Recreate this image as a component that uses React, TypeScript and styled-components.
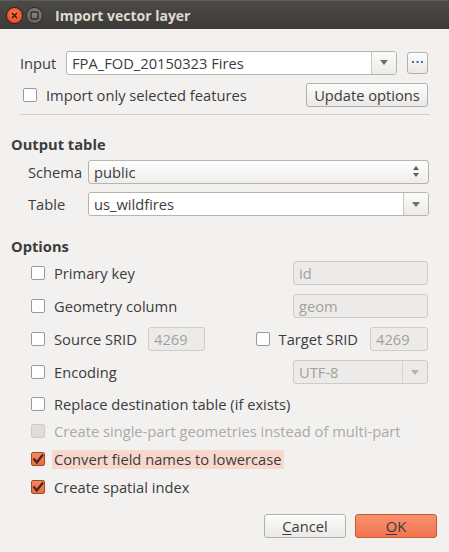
import React from "react";
import styled, { createGlobalStyle, css } from "styled-components";

const Global = createGlobalStyle`
  html, body { margin: 0; padding: 0; background: #f2f1f0; }
  body { font-family: "Open Sans", "DejaVu Sans", sans-serif; }
  * { box-sizing: border-box; }
`;

const FONT = `"Open Sans", "DejaVu Sans", sans-serif`;

const Window = styled.div`
  width: 449px;
  height: 552px;
  background: #f2f1f0;
  display: flex;
  flex-direction: column;
  font-family: ${FONT};
  font-size: 14.7px;
  color: #3c3c3c;
  overflow: hidden;
`;

const TitleBar = styled.div`
  height: 29px;
  flex: none;
  background: linear-gradient(#4b4a46, #3c3b37);
  border-top: 1px solid #5e5c57;
  display: flex;
  align-items: center;
  padding-left: 6px;
  gap: 3px;
`;

const WinButton = styled.div<{ $kind: "close" | "min" }>`
  width: 17px;
  height: 17px;
  border-radius: 50%;
  display: flex;
  align-items: center;
  justify-content: center;
  ${(p) =>
    p.$kind === "close"
      ? css`
          background: radial-gradient(circle at 50% 35%, #f7774f, #e0441c);
          border: 1px solid #3a1a10;
        `
      : css`
          background: radial-gradient(circle at 50% 35%, #87857f, #5f5d58);
          border: 1px solid #2c2b28;
        `}
`;

const Title = styled.div`
  margin-left: 9px;
  color: #dfdbd2;
  font-weight: 700;
  font-size: 14px;
`;

const Body = styled.div`
  flex: 1;
  display: flex;
  flex-direction: column;
  padding: 0 11px 0 11px;
`;

const Row = styled.div<{ $top?: number; $left?: number; $right?: number; $h?: number }>`
  display: flex;
  align-items: center;
  height: ${(p) => p.$h ?? 24}px;
  margin-top: ${(p) => p.$top ?? 0}px;
  padding-left: ${(p) => p.$left ?? 0}px;
  padding-right: ${(p) => p.$right ?? 0}px;
  flex: none;
`;

const Label = styled.span<{ $w?: number; $disabled?: boolean }>`
  ${(p) => (p.$w ? `width: ${p.$w}px; flex: none;` : "")}
  color: ${(p) => (p.$disabled ? "#acaaa6" : "#3c3c3c")};
  white-space: nowrap;
`;

const Separator = styled.div`
  height: 1px;
  background: #d3d0cc;
  margin: 7px 8px 0 9px;
  flex: none;
`;

const Heading = styled.div<{ $top: number }>`
  font-weight: 700;
  margin-top: ${(p) => p.$top}px;
  height: 20px;
  line-height: 20px;
  flex: none;
`;

const Field = styled.div<{ $w?: number; $disabled?: boolean; $grow?: boolean }>`
  height: 24px;
  ${(p) => (p.$w ? `width: ${p.$w}px; flex: none;` : "")}
  ${(p) => (p.$grow ? "flex: 1;" : "")}
  border: 1px solid ${(p) => (p.$disabled ? "#cfccc7" : "#b7b4ae")};
  border-radius: 3px;
  background: ${(p) => (p.$disabled ? "#ecebe9" : "#ffffff")};
  color: ${(p) => (p.$disabled ? "#a3a19d" : "#3c3c3c")};
  display: flex;
  align-items: center;
  overflow: hidden;
`;

const FieldText = styled.span`
  flex: 1;
  padding-left: 5px;
  white-space: nowrap;
`;

const ArrowPart = styled.div<{ $disabled?: boolean }>`
  width: 25px;
  height: 100%;
  flex: none;
  border-left: 1px solid ${(p) => (p.$disabled ? "#d6d3cf" : "#c9c6c1")};
  background: ${(p) => (p.$disabled ? "#ecebe9" : "linear-gradient(#fbfbfa, #ecebe9)")};
  display: flex;
  align-items: center;
  justify-content: center;
`;

const Down = styled.div<{ $disabled?: boolean }>`
  width: 0;
  height: 0;
  border-left: 4px solid transparent;
  border-right: 4px solid transparent;
  border-top: 5px solid ${(p) => (p.$disabled ? "#b6b4b0" : "#6f6d69")};
`;

const SpinCombo = styled.div`
  flex: 1;
  height: 24px;
  border: 1px solid #b7b4ae;
  border-radius: 3px;
  background: linear-gradient(#fdfdfd, #efeeec);
  display: flex;
  align-items: center;
  padding-right: 9px;
`;

const UpDown = styled.div`
  display: flex;
  flex-direction: column;
  gap: 3px;
  align-items: center;
`;

const Up = styled.div`
  width: 0;
  height: 0;
  border-left: 3.5px solid transparent;
  border-right: 3.5px solid transparent;
  border-bottom: 4px solid #5e5c58;
`;

const SmallDown = styled.div`
  width: 0;
  height: 0;
  border-left: 3.5px solid transparent;
  border-right: 3.5px solid transparent;
  border-top: 4px solid #5e5c58;
`;

const Button = styled.button<{ $w: number; $h?: number; $primary?: boolean }>`
  width: ${(p) => p.$w}px;
  height: ${(p) => p.$h ?? 24}px;
  flex: none;
  font-family: ${FONT};
  font-size: 14.7px;
  color: #3c3c3c;
  border-radius: 3px;
  padding: 0;
  display: flex;
  align-items: center;
  justify-content: center;
  ${(p) =>
    p.$primary
      ? css`
          border: 1px solid #c65a34;
          background: linear-gradient(#f99170, #f2754e);
        `
      : css`
          border: 1px solid #b3b0aa;
          background: linear-gradient(#fcfcfb, #eae9e7);
          box-shadow: inset 0 1px 0 #ffffff;
        `}
`;

const Box = styled.span<{ $checked?: boolean; $disabled?: boolean }>`
  width: 14px;
  height: 14px;
  flex: none;
  border-radius: 2px;
  display: inline-flex;
  align-items: center;
  justify-content: center;
  ${(p) =>
    p.$checked
      ? css`
          background: linear-gradient(#f6875e, #ed6a3e);
          border: 1px solid #a4482a;
        `
      : p.$disabled
      ? css`
          background: #e0dedb;
          border: 1px solid #cfccc8;
        `
      : css`
          background: #ffffff;
          border: 1px solid #9c9a96;
        `}
`;

const Check = ({ checked, disabled }: { checked?: boolean; disabled?: boolean }) => (
  <Box $checked={checked} $disabled={disabled}>
    {checked && (
      <svg width="12" height="12" viewBox="0 0 12 12">
        <path d="M1.5 5.5 L4.8 9.5 L11 1.5" fill="none" stroke="#3b2a22" strokeWidth="2.2" />
      </svg>
    )}
  </Box>
);

const CheckItem = styled.div<{ $gap?: number }>`
  display: flex;
  align-items: center;
  gap: ${(p) => p.$gap ?? 9}px;
`;

const Highlight = styled.span`
  background: #f8d8cd;
  padding: 0 3px 0 2px;
  height: 19px;
  line-height: 19px;
  margin-left: -2px;
`;

const Spacer = styled.div<{ $w?: number }>`
  ${(p) => (p.$w ? `width: ${p.$w}px; flex: none;` : "flex: 1;")}
`;

const SridGrid = styled.div`
  display: grid;
  grid-template-columns: 117px 57px 1fr 58px;
  align-items: center;
  height: 24px;
  width: 100%;
`;

const TargetGroup = styled.div`
  justify-self: end;
  padding-right: 12px;
`;

const Footer = styled.div`
  display: flex;
  justify-content: flex-end;
  gap: 9px;
  margin-top: 15px;
  padding-right: 1px;
`;

const U = styled.span`
  text-decoration: underline;
  text-underline-offset: 2px;
`;

export default function App() {
  return (
    <>
      <Global />
      <Window>
        <TitleBar>
          <WinButton $kind="close">
            <svg width="7" height="7" viewBox="0 0 7 7">
              <path d="M1 1 L6 6 M6 1 L1 6" stroke="#3a1408" strokeWidth="1.4" />
            </svg>
          </WinButton>
          <WinButton $kind="min">
            <svg width="9" height="9" viewBox="0 0 9 9">
              <rect x="1" y="1" width="7" height="7" rx="1" fill="none" stroke="#2e2d2a" strokeWidth="1.4" />
            </svg>
          </WinButton>
          <Title>Import vector layer</Title>
        </TitleBar>
        <Body>
          <Row $top={21} $left={9} $right={10} $h={25}>
            <Label $w={46}>Input</Label>
            <Field $grow>
              <FieldText>FPA_FOD_20150323 Fires</FieldText>
              <ArrowPart>
                <Down />
              </ArrowPart>
            </Field>
            <Spacer $w={10} />
            <Button $w={21} $h={22}>
              <svg width="11" height="3" viewBox="0 0 11 3">
                <rect x="0" y="0" width="2" height="2" fill="#3b6db3" />
                <rect x="4.5" y="0" width="2" height="2" fill="#3b6db3" />
                <rect x="9" y="0" width="2" height="2" fill="#3b6db3" />
              </svg>
            </Button>
          </Row>
          <Row $top={8} $left={12} $right={10}>
            <CheckItem>
              <Check />
              <Label>Import only selected features</Label>
            </CheckItem>
            <Spacer />
            <Button $w={122}>Update options</Button>
          </Row>
          <Separator />
          <Heading $top={19}>Output table</Heading>
          <Row $top={6} $left={17} $right={9} $h={23}>
            <Label $w={60}>Schema</Label>
            <SpinCombo>
              <FieldText>public</FieldText>
              <UpDown>
                <Up />
                <SmallDown />
              </UpDown>
            </SpinCombo>
          </Row>
          <Row $top={9} $left={17} $right={9}>
            <Label $w={60}>Table</Label>
            <Field $grow>
              <FieldText>us_wildfires</FieldText>
              <ArrowPart>
                <Down />
              </ArrowPart>
            </Field>
          </Row>
          <Heading $top={20}>Options</Heading>
          <Row $top={5} $left={20} $right={10}>
            <CheckItem>
              <Check />
              <Label>Primary key</Label>
            </CheckItem>
            <Spacer />
            <Field $w={135} $disabled>
              <FieldText>id</FieldText>
            </Field>
          </Row>
          <Row $top={9} $left={20} $right={10}>
            <CheckItem>
              <Check />
              <Label>Geometry column</Label>
            </CheckItem>
            <Spacer />
            <Field $w={135} $disabled>
              <FieldText>geom</FieldText>
            </Field>
          </Row>
          <Row $top={9} $left={20} $right={10}>
            <SridGrid>
              <CheckItem>
                <Check />
                <Label>Source SRID</Label>
              </CheckItem>
              <Field $disabled>
                <FieldText>4269</FieldText>
              </Field>
              <TargetGroup>
                <CheckItem>
                  <Check />
                  <Label>Target SRID</Label>
                </CheckItem>
              </TargetGroup>
              <Field $disabled>
                <FieldText>4269</FieldText>
              </Field>
            </SridGrid>
          </Row>
          <Row $top={9} $left={20} $right={10}>
            <CheckItem>
              <Check />
              <Label>Encoding</Label>
            </CheckItem>
            <Spacer />
            <Field $w={135} $disabled>
              <FieldText>UTF-8</FieldText>
              <ArrowPart $disabled>
                <Down $disabled />
              </ArrowPart>
            </Field>
          </Row>
          <Row $top={8} $left={20} $right={10}>
            <CheckItem>
              <Check />
              <Label>Replace destination table (if exists)</Label>
            </CheckItem>
          </Row>
          <Row $top={3} $left={20} $right={10}>
            <CheckItem>
              <Check disabled />
              <Label $disabled>Create single-part geometries instead of multi-part</Label>
            </CheckItem>
          </Row>
          <Row $top={4} $left={20} $right={10}>
            <CheckItem>
              <Check checked />
              <Highlight>Convert field names to lowercase</Highlight>
            </CheckItem>
          </Row>
          <Row $top={4} $left={20} $right={10}>
            <CheckItem>
              <Check checked />
              <Label>Create spatial index</Label>
            </CheckItem>
          </Row>
          <Footer>
            <Button $w={82}>
              <span>
                <U>C</U>ancel
              </span>
            </Button>
            <Button $w={82} $primary>
              <span>
                <U>O</U>K
              </span>
            </Button>
          </Footer>
        </Body>
      </Window>
    </>
  );
}
